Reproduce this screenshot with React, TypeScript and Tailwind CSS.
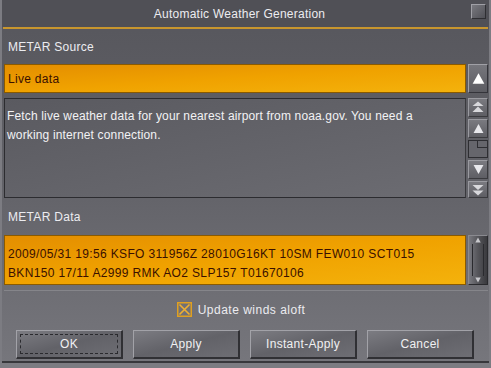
import React from "react";

const font = { fontFamily: '"Liberation Sans", Arial, sans-serif' };

function Tri({ dir, size = 10, color = "#e8e8ec" }: { dir: "up" | "down"; size?: number; color?: string }) {
  return (
    <svg width={size} height={size} viewBox="0 0 10 10">
      {dir === "up" ? <polygon points="5,1 9.5,9 0.5,9" fill={color} /> : <polygon points="0.5,1 9.5,1 5,9" fill={color} />}
    </svg>
  );
}

function DblTri({ dir }: { dir: "up" | "down" }) {
  return (
    <svg width="12" height="12" viewBox="0 0 12 12">
      {dir === "up" ? (
        <>
          <polygon points="6,0.5 11.5,5 0.5,5" fill="#d8d8dc" />
          <polygon points="6,5.5 11.5,11 0.5,11" fill="#d8d8dc" />
        </>
      ) : (
        <>
          <polygon points="0.5,1 11.5,1 6,6" fill="#d8d8dc" />
          <polygon points="0.5,6.5 11.5,6.5 6,11.5" fill="#d8d8dc" />
        </>
      )}
    </svg>
  );
}

function SBtn({ children, h = "h-[19px]" }: { children?: React.ReactNode; h?: string }) {
  return (
    <div
      className={`${h} w-full flex items-center justify-center border border-t-[#9a9aa0] border-l-[#9a9aa0] border-b-[#3a3a3e] border-r-[#3a3a3e] bg-gradient-to-b from-[#7a7a80] to-[#5e5e64]`}
    >
      {children}
    </div>
  );
}

function Button({ label, focus }: { label: string; focus?: boolean }) {
  return (
    <div className="w-[107px] h-[29px] p-[3px] border border-t-[#a2a2a8] border-l-[#a2a2a8] border-b-[#303034] border-r-[#303034] border-b-2 border-r-2 bg-gradient-to-br from-[#7c7c82] via-[#626268] to-[#6e6e74]">
      <div
        className={`w-full h-full flex items-center justify-center text-[12px] text-[#f0f0f2] tracking-[0.3px] ${
          focus ? "border border-dashed border-[#2a2a2e]" : ""
        }`}
      >
        {label}
      </div>
    </div>
  );
}

export default function App() {
  return (
    <div style={font} className="w-[491px] h-[368px] overflow-hidden bg-[#7c7c82] pl-[2px] pr-[2px]">
      <div className="w-full h-[363px] flex flex-col bg-gradient-to-b from-[#56565c] via-[#626268] to-[#76767c] border-b-2 border-[#38383c]">
        {/* title bar */}
        <div className="relative h-[27px] flex items-center justify-center bg-[#505056] text-[12px] text-[#ececf0] tracking-[0.25px] pr-[12px]">
          Automatic Weather Generation
          <div className="absolute right-[3px] top-[4px] w-[15px] h-[15px] border border-t-[#a0a0a6] border-l-[#a0a0a6] border-b-[#2e2e32] border-r-[#2e2e32] bg-gradient-to-br from-[#7a7a80] to-[#505056]" />
        </div>
        <div className="mx-[1px] h-[2px] bg-[#c8962e]" />

        <div className="flex flex-col pl-[2px] pr-[1px]">
          {/* METAR Source label */}
          <div className="h-[35px] flex items-center pl-[4px] text-[12px] text-[#ececf0] tracking-[0.3px]">METAR Source</div>

          {/* Live data row */}
          <div className="flex gap-[2px] h-[29px]">
            <div className="flex-1 flex items-center pl-[3px] text-[12px] text-[#3a1000] tracking-[0.3px] border border-[#8a5a00] bg-gradient-to-br from-[#e48e00] via-[#f0a200] to-[#f4b20c]">
              Live data
            </div>
            <div className="w-[20px] flex items-center justify-center border border-t-[#a0a0a6] border-l-[#a0a0a6] border-b-[#34343a] border-r-[#34343a] bg-gradient-to-b from-[#76767c] to-[#5c5c62]">
              <Tri dir="up" size={13} color="#ffffff" />
            </div>
          </div>

          {/* description */}
          <div className="flex gap-[2px] h-[100px] mt-[5px]">
            <div className="flex-1 border border-t-[#2c2c30] border-l-[#2c2c30] border-b-[#2c2c30] border-r-[#3a3a3e] bg-gradient-to-br from-[#5a5a60] to-[#6c6c72] pl-[2px] pt-[8px] text-[12px] leading-[19px] text-[#f2f2f4] tracking-[0.15px]">
              Fetch live weather data for your nearest airport from noaa.gov. You need a
              <br />
              working internet connection.
            </div>
            <div className="w-[20px] flex flex-col gap-[2px]">
              <SBtn>
                <DblTri dir="up" />
              </SBtn>
              <SBtn>
                <Tri dir="up" size={11} />
              </SBtn>
              <div className="h-[19px] border border-[#2e2e32] bg-[#66666c] flex flex-col">
                <div className="h-[7px] border-b border-[#2e2e32] ml-[8px] border-l" />
              </div>
              <SBtn>
                <Tri dir="down" size={11} />
              </SBtn>
              <SBtn h="h-[17px]">
                <DblTri dir="down" />
              </SBtn>
            </div>
          </div>

          {/* METAR Data label */}
          <div className="h-[37px] flex items-center pl-[4px] text-[12px] text-[#ececf0] tracking-[0.3px]">METAR Data</div>

          {/* data box */}
          <div className="flex gap-[2px] h-[50px]">
            <div className="flex-1 border border-[#8a5a00] bg-gradient-to-br from-[#e48e00] via-[#f0a200] to-[#f4b20c] pl-[3px] pt-[9px] text-[12px] leading-[19px] text-[#3a1000] tracking-[0.35px]">
              <div>2009/05/31 19:56 KSFO 311956Z 28010G16KT 10SM FEW010 SCT015</div>
              <div>BKN150 17/11 A2999 RMK AO2 SLP157 T01670106</div>
            </div>
            <div className="w-[20px] flex flex-col border border-t-[#8a8a90] border-l-[#8a8a90] border-b-[#2a2a2e] border-r-[#2a2a2e] bg-gradient-to-r from-[#7a7a80] via-[#55555a] to-[#3a3a3e]">
              <div className="h-[8px] flex items-center justify-center">
                <Tri dir="up" size={6} color="#c8c8cc" />
              </div>
              <div className="flex-1 mx-[3px] border-x border-[#2a2a2e]" />
              <div className="h-[8px] flex items-center justify-center">
                <Tri dir="down" size={6} color="#c8c8cc" />
              </div>
            </div>
          </div>

          <div className="mt-[5px] h-px bg-[#85858a]" />

          {/* checkbox */}
          <div className="h-[37px] flex items-center justify-center gap-[6px] pr-[10px] text-[12px] text-[#ececf0] tracking-[0.5px]">
            <svg width="15" height="15" viewBox="0 0 15 15">
              <rect x="0.75" y="0.75" width="13.5" height="13.5" fill="none" stroke="#e0a020" strokeWidth="1.5" />
              <path d="M2.5 2.5 L12.5 12.5 M12.5 2.5 L2.5 12.5" stroke="#f0b030" strokeWidth="1.6" />
            </svg>
            <span>Update winds aloft</span>
          </div>

          {/* buttons */}
          <div className="flex gap-[10px] pl-[12px] mt-[2px]">
            <Button label="OK" focus />
            <Button label="Apply" />
            <Button label="Instant-Apply" />
            <Button label="Cancel" />
          </div>
        </div>
      </div>
    </div>
  );
}
